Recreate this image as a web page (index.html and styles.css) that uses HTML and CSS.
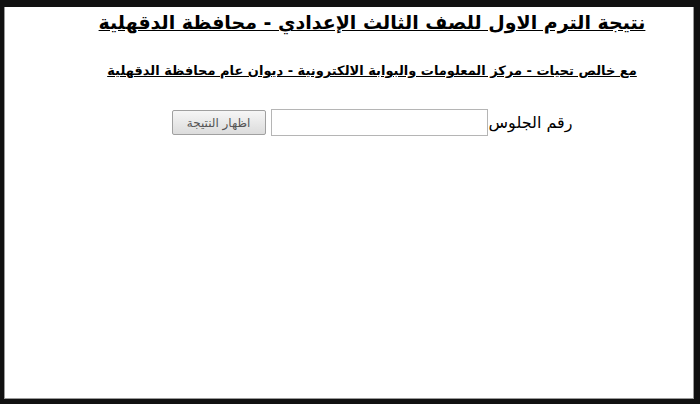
FILE: index.html
```html
<!DOCTYPE html>
<html lang="ar" dir="rtl">
<head>
<meta charset="utf-8">
<link rel="stylesheet" href="styles.css">
</head>
<body>
<div class="frame">
  <div class="page">
    <h1 class="title">نتيجة الترم الاول للصف الثالث الإعدادي - محافظة الدقهلية</h1>
    <h2 class="subtitle">مع خالص تحيات - مركز المعلومات والبوابة الالكترونية - ديوان عام محافظة الدقهلية</h2>
    <form class="form">
      <label class="label" for="seat">رقم الجلوس</label>
      <input class="field" id="seat" type="text">
      <button class="btn" type="button">اظهار النتيجة</button>
    </form>
  </div>
</div>
</body>
</html>
```

FILE: styles.css
```css
html, body {
  margin: 0;
  padding: 0;
  height: 100%;
  background: #111;
}
.frame {
  height: 100%;
  box-sizing: border-box;
  padding: 7px 6px 5px 4px;
}
.page {
  height: 100%;
  box-sizing: border-box;
  background: #fff;
  border-left: 1px solid #9a9a9a;
  border-right: 1px solid #9a9a9a;
  border-bottom: 1px solid #9a9a9a;
  font-family: "DejaVu Sans", "Liberation Sans", sans-serif;
  color: #000;
  text-align: center;
  padding-left: 46px;
  overflow: hidden;
}
.title {
  margin: 0;
  padding-top: 1px;
  font-size: 19px;
  font-weight: bold;
  text-decoration: underline;
  line-height: 28px;
}
.subtitle {
  margin: 25px 0 0;
  font-size: 13px;
  font-weight: bold;
  text-decoration: underline;
  line-height: 20px;
}
.form {
  margin-top: 28px;
  display: flex;
  justify-content: center;
  align-items: center;
  gap: 0;
}
.label {
  font-size: 16px;
  margin-left: 1px;
}
.field {
  width: 213px;
  height: 23px;
  border: 1px solid #b5b5b5;
  margin: 0 0 0 5px;
  padding: 1px;
}
.btn {
  width: 94px;
  height: 25px;
  font-family: "DejaVu Sans", sans-serif;
  font-size: 12px;
  color: #555;
  border: 1px solid #a0a0a0;
  border-radius: 2px;
  background: linear-gradient(#f6f6f6, #dcdcdc);
  padding: 0;
}
```
